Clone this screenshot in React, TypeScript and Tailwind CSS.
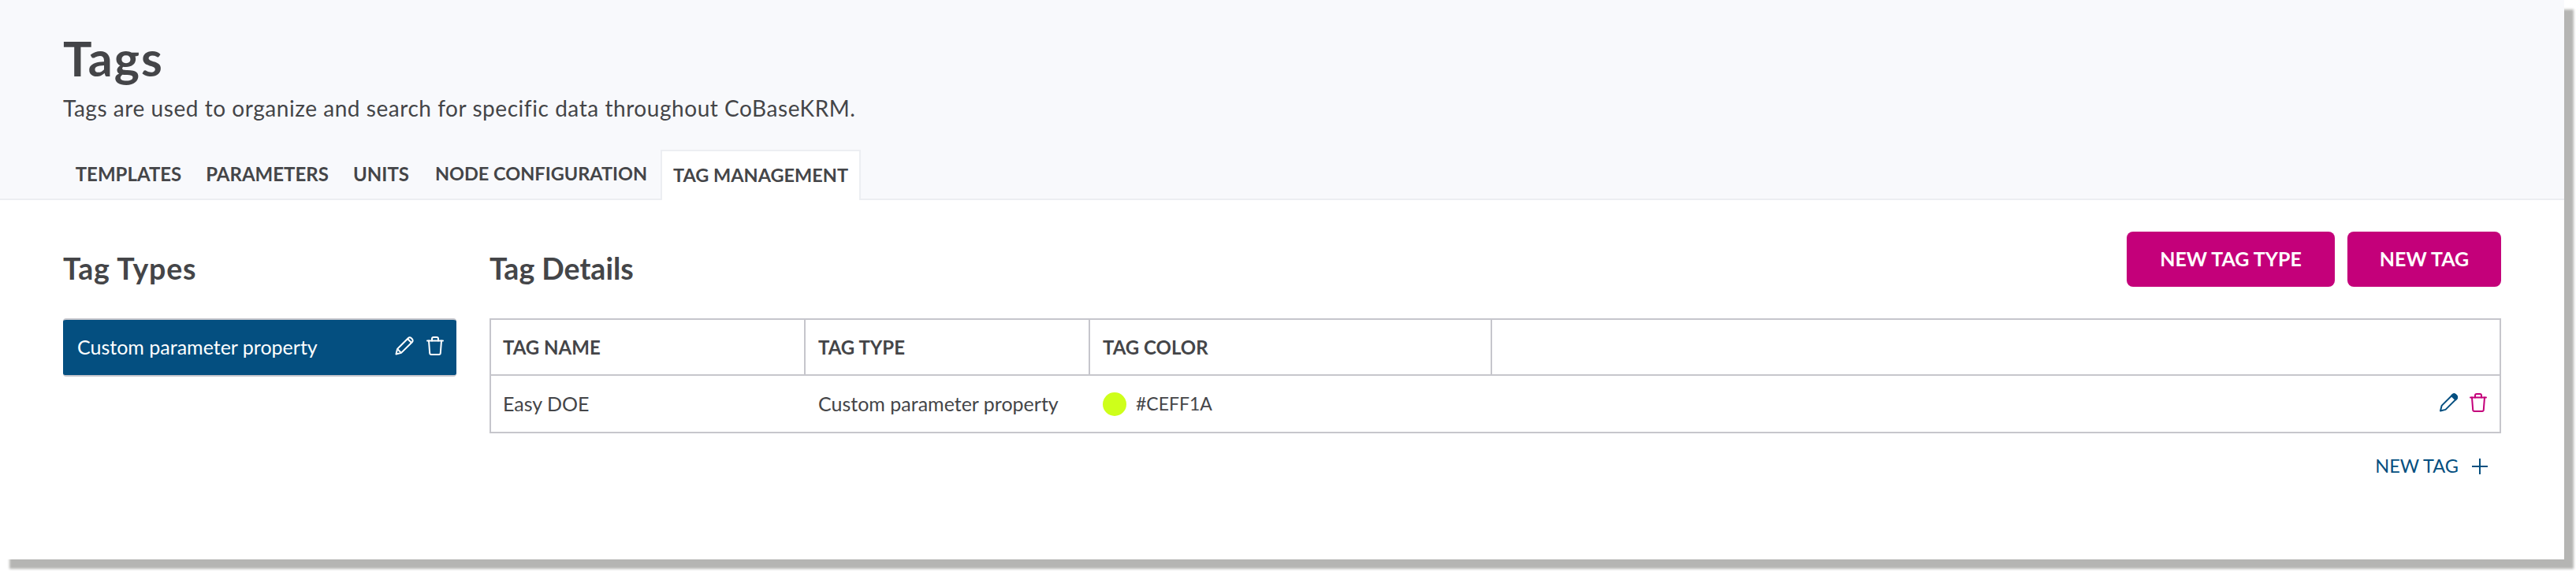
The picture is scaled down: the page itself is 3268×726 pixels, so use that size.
const font = "font-['Lato','Liberation_Sans',sans-serif]";

function PencilIcon({ className }: { className?: string }) {
  return (
    <svg className={className} viewBox="0 0 24 24" fill="none" stroke="currentColor" strokeWidth="2" strokeLinejoin="round">
      <path d="M1.5 22.5l1.6-6.6L16.8 2.2c1.1-1.1 2.9-1.1 4 0l1 1c1.1 1.1 1.1 2.9 0 4L8 20.9z" />
      <path d="M3.1 15.9L8 20.9" />
      <path d="M16 3l5 5" />
    </svg>
  );
}

function FilledPencilIcon({ className }: { className?: string }) {
  return (
    <svg className={className} viewBox="0 0 24 24" fill="none" stroke="currentColor" strokeWidth="2" strokeLinejoin="round">
      <path d="M1.5 22.5l1.6-6.6L16.8 2.2c1.1-1.1 2.9-1.1 4 0l1 1c1.1 1.1 1.1 2.9 0 4L8 20.9z" />
      <path d="M16.8 2.2c1.1-1.1 2.9-1.1 4 0l1 1c1.1 1.1 1.1 2.9 0 4l-1.2 1.2-5-5z" fill="currentColor" />
    </svg>
  );
}

function TrashIcon({ className }: { className?: string }) {
  return (
    <svg className={className} viewBox="0 0 22 24" fill="none" stroke="currentColor" strokeWidth="2" strokeLinejoin="round" strokeLinecap="round">
      <path d="M1 5.5h20" />
      <path d="M7 5.5V3c0-1.1.9-2 2-2h4c1.1 0 2 .9 2 2v2.5" />
      <path d="M3 5.5l1.2 15.7c.1 1 .9 1.8 1.9 1.8h9.8c1 0 1.8-.8 1.9-1.8L19 5.5" />
    </svg>
  );
}

const tabs = [
  { label: "TEMPLATES", w: "w-[166px]", size: "text-[24px]" },
  { label: "PARAMETERS", w: "w-[186px]", size: "text-[24px]" },
  { label: "UNITS", w: "w-[103px]", size: "text-[24px]" },
  { label: "NODE CONFIGURATION", w: "w-[303px]", size: "text-[23.5px]" },
];

export default function App() {
  return (
    <div className="w-[3268px] h-[726px] overflow-hidden bg-white">
      <div className={`w-[3253px] h-[710px] bg-white shadow-[12px_12px_3px_#b5b5b3] text-[#444548] ${font}`}>
        {/* Header */}
        <div className="h-[254px] bg-[#f8f9fc] border-b-2 border-[#eceef2] pl-20 flex flex-col">
          <h1 className="mt-[44px] text-[61px] leading-[60px] font-bold tracking-[2px]">Tags</h1>
          <p className="mt-[16px] text-[28px] leading-[34px] tracking-[0.55px]">
            Tags are used to organize and search for specific data throughout CoBaseKRM.
          </p>
          <div className="mt-auto flex items-end">
            {tabs.map((t) => (
              <button key={t.label} className={`${t.w} ${t.size} h-[62px] text-center font-bold`}>
                {t.label}
              </button>
            ))}
            <button className="w-[254px] h-[64px] -mb-[2px] bg-white border-2 border-b-0 border-[#eceef2] text-[23.5px] font-bold">
              TAG MANAGEMENT
            </button>
          </div>
        </div>

        {/* Body */}
        <div className="flex pl-20 pr-20 pt-10">
          <div className="w-[499px] mr-[42px] shrink-0">
            <h2 className="h-[70px] pt-6 flex items-center text-[37.5px] font-bold tracking-[0.8px]">Tag Types</h2>
            <div className="mt-10 h-[74px] bg-[#044f80] border-y-2 border-[#c6c6cc] rounded flex items-center justify-between pl-[18px] pr-4 text-white">
              <span className="text-[25px]">Custom parameter property</span>
              <div className="flex items-center gap-4 -mt-[4px]">
                <PencilIcon className="w-6 h-6" />
                <TrashIcon className="w-[22px] h-6" />
              </div>
            </div>
          </div>

          <div className="flex-1">
            <div className="h-[70px] flex items-center justify-between">
              <h2 className="pt-6 text-[37.5px] font-bold">Tag Details</h2>
              <div className="flex gap-4">
                <button className="w-[264px] h-[70px] rounded-lg bg-[#c4007a] text-white text-[25px] font-bold">NEW TAG TYPE</button>
                <button className="w-[195px] h-[70px] rounded-lg bg-[#c4007a] text-white text-[25px] font-bold">NEW TAG</button>
              </div>
            </div>

            <div className="mt-10 border-2 border-[#c6c6cc] text-[25px]">
              <div className="h-[71px] flex items-center text-[24px] font-bold border-b-2 border-[#c6c6cc]">
                <div className="w-[399px] h-full flex items-center pl-[15px] border-r-2 border-[#c6c6cc]">TAG NAME</div>
                <div className="w-[361px] h-full flex items-center pl-[16px] border-r-2 border-[#c6c6cc]">TAG TYPE</div>
                <div className="w-[510px] h-full flex items-center pl-[16px] border-r-2 border-[#c6c6cc]">TAG COLOR</div>
              </div>
              <div className="h-[71px] flex items-center">
                <div className="w-[399px] pl-[15px]">Easy DOE</div>
                <div className="w-[361px] pl-[16px]">Custom parameter property</div>
                <div className="flex-1 pl-[16px] flex items-center gap-3">
                  <span className="w-[30px] h-[30px] rounded-full bg-[#ceff1a]" />
                  <span className="text-[23px]">#CEFF1A</span>
                </div>
                <div className="flex items-center gap-[14px] pr-4 text-[#044f80] -mt-[4px]">
                  <FilledPencilIcon className="w-[25px] h-6" />
                  <TrashIcon className="w-[22px] h-6 text-[#c4007a]" />
                </div>
              </div>
            </div>

            <div className="mt-6 flex items-center justify-end gap-[17px] pr-[17px] text-[#044f80]">
              <span className="text-[23.5px]">NEW TAG</span>
              <svg className="w-5 h-5" viewBox="0 0 20 20" stroke="currentColor" strokeWidth="2">
                <path d="M10 0v20M0 10h20" />
              </svg>
            </div>
          </div>
        </div>
      </div>
    </div>
  );
}
